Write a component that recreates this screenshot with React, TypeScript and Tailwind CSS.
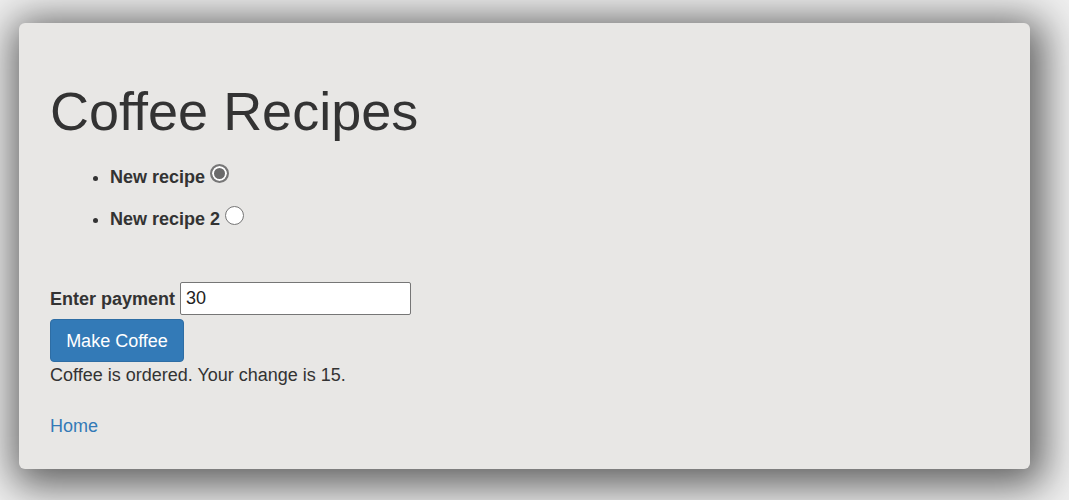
import { useState } from "react";

const recipes = ["New recipe", "New recipe 2"];

const Radio = ({ checked, onClick }: { checked: boolean; onClick: () => void }) => (
  <span
    onClick={onClick}
    className={`ml-[5px] inline-block h-[19px] w-[19px] cursor-pointer rounded-full align-baseline ${
      checked
        ? "border-2 border-[#777] bg-[#6b6b6b] shadow-[inset_0_0_0_2px_#fff]"
        : "border border-[#767676] bg-white"
    }`}
  />
);

export default function App() {
  const [selected, setSelected] = useState(0);
  const [payment, setPayment] = useState("30");

  return (
    <div className="min-h-[500px] bg-[#efefef] pl-[19px] pr-[39px] pt-[23px] pb-[31px] font-['Liberation_Sans',Arial,sans-serif] text-[18px] leading-[26px] text-[#333]">
      <div className="h-[446px] rounded-[6px] bg-[#e8e7e5] px-[31px] pt-[60px] shadow-[4px_7px_40px_10px_rgba(0,0,0,0.6)]">
        <h1 className="text-[54px] leading-[57px]">Coffee Recipes</h1>

        <ul className="mt-[24px] list-disc pl-[60px]">
          {recipes.map((name, i) => (
            <li key={name} className="mb-[15px] h-[27px] font-bold">
              {name}
              <Radio checked={selected === i} onClick={() => setSelected(i)} />
            </li>
          ))}
        </ul>

        <div className="mt-[49px] flex items-center">
          <label className="font-bold">Enter payment</label>
          <input
            value={payment}
            onChange={(e) => setPayment(e.target.value)}
            className="ml-[5px] h-[33px] w-[231px] rounded-[2px] border border-[#767676] bg-white px-[5px] text-[18px] text-[#222] outline-none"
          />
        </div>
        <button className="mt-[4px] h-[43px] w-[134px] rounded-[4px] border border-[#2e6da4] bg-[#337ab7] text-[18px] text-white">
          Make Coffee
        </button>
        <p>Coffee is ordered. Your change is 15.</p>

        <a href="#" className="mt-[25px] block w-fit text-[#337ab7]">
          Home
        </a>
      </div>
    </div>
  );
}
